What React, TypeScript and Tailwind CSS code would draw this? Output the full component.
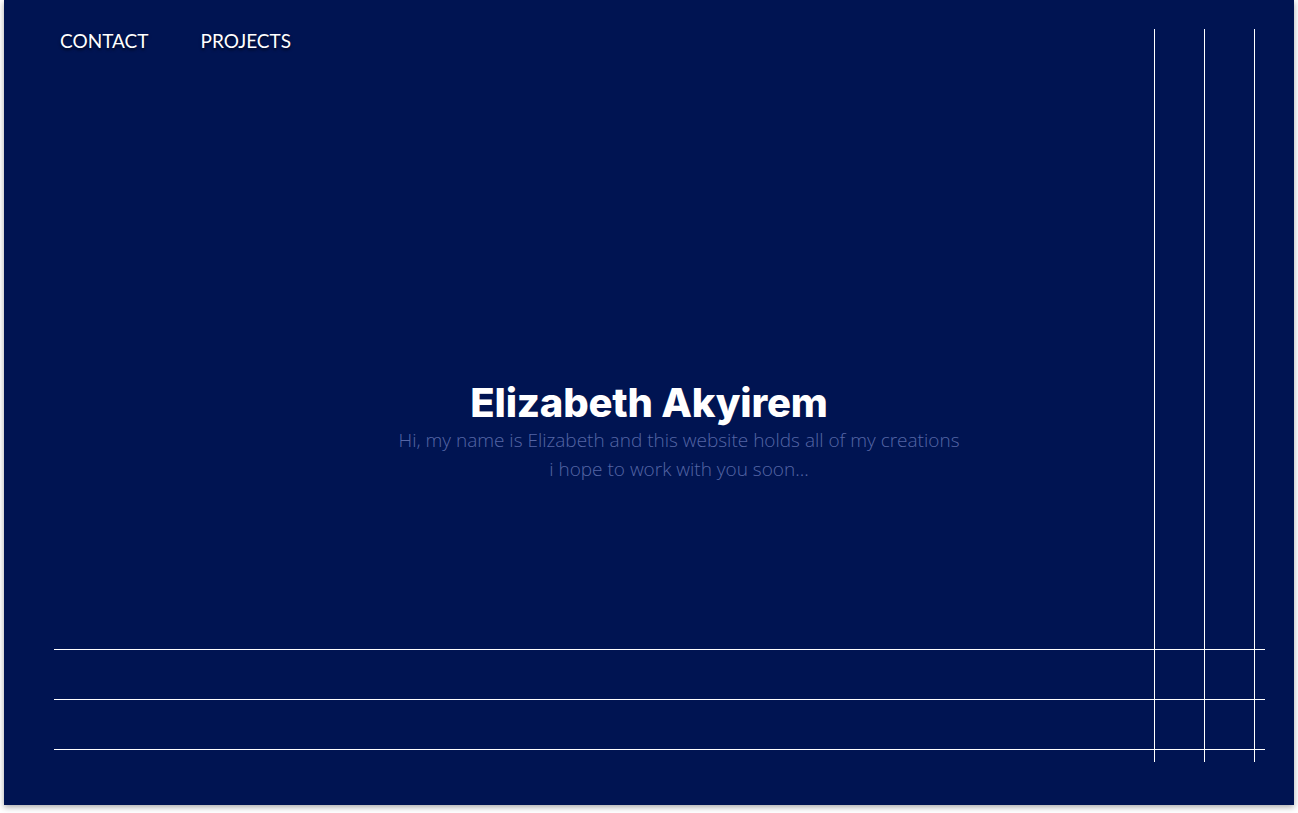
export default function App() {
  return (
    <div className="min-h-screen bg-white px-1">
      <div className="relative h-[805px] bg-[#001452] shadow-[0_2px_6px_rgba(0,0,0,0.35)] overflow-hidden">
        <nav className="flex gap-[52px] pl-14 pt-[27px] text-[19px] text-white font-['Lato','Open_Sans',sans-serif] [text-shadow:0_2px_3px_rgba(0,0,0,0.6)]">
          <a href="#">CONTACT</a>
          <a href="#">PROJECTS</a>
        </nav>

        <div className="flex flex-col items-center pt-[324px]">
          <h1 className="text-[40px] leading-[46px] font-extrabold text-white tracking-[-0.005em] font-['Inter','Liberation_Sans',sans-serif]">
            Elizabeth Akyirem
          </h1>
          <p className="pl-[60px] text-center text-[19px] leading-[29px] font-light text-[#5566a6] font-['Open_Sans','Lato',sans-serif]">
            Hi, my name is Elizabeth and this website holds all of my creations
            <br />i hope to work with you soon...
          </p>
        </div>

        {/* decorative grid */}
        <div className="absolute top-[29px] bottom-[43px] left-[1150px] flex gap-[49px]">
          <div className="w-px bg-white" />
          <div className="w-px bg-white" />
          <div className="w-px bg-white" />
        </div>
        <div className="absolute top-[649px] left-[50px] w-[1211px] flex flex-col gap-[49px]">
          <div className="h-px bg-white" />
          <div className="h-px bg-white" />
          <div className="h-px bg-white" />
        </div>
      </div>
    </div>
  );
}
